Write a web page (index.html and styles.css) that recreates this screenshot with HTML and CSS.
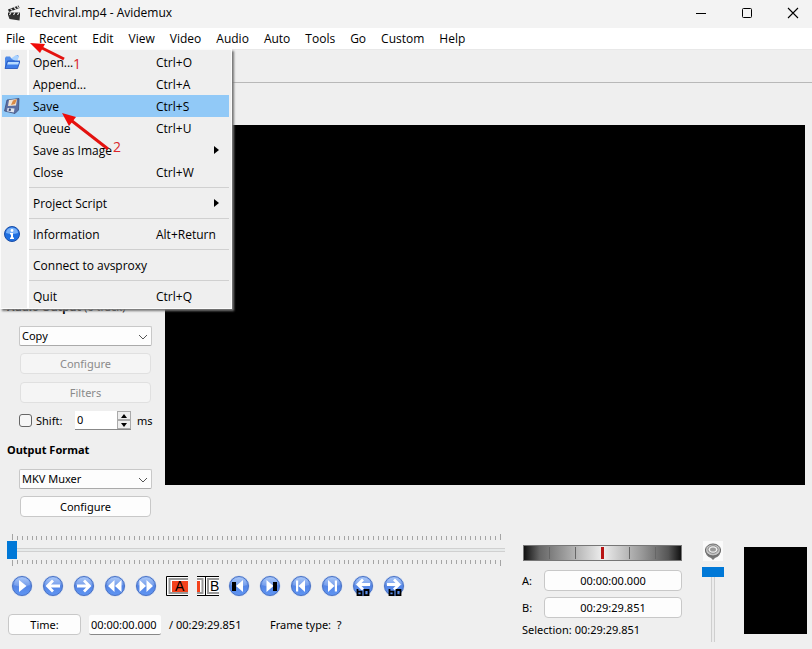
FILE: index.html
```
<!DOCTYPE html>
<html lang="en">
<head>
    <meta charset="UTF-8">
    <title>Techviral.mp4 - Avidemux</title>
    <link rel="stylesheet" href="styles.css">
</head>
<body>
    <!-- Shared icon parts -->
    <svg class="defs" width="0" height="0" aria-hidden="true">
        <defs>
            <linearGradient id="blue" x1="0" y1="0" x2="0" y2="1">
                <stop offset="0" stop-color="#9dc0f8"/>
                <stop offset="0.5" stop-color="#5586e6"/>
                <stop offset="1" stop-color="#5f95f3"/>
            </linearGradient>
            <symbol id="orb" viewBox="0 0 22 22">
                <circle cx="11" cy="11" r="10.5" fill="#c9d6ee"/>
                <circle cx="11" cy="11" r="9.5" fill="url(#blue)" stroke="#4a72c4" stroke-width="1"/>
                <path d="M3 10a8 7.500 0 0 1 16 0q-8 3-16 0z" fill="#fff" opacity="0.18"/>
            </symbol>
        </defs>
    </svg>

    <header class="titlebar">
        <svg width="14" height="16" viewBox="0 0 14 16">
            <path d="M1 4.500L11.500 0.500l1 2.500L2 7z" fill="#222"/>
            <path d="M3.500 3.600l2 2M7 2.300l2 2M10 1.200l1.600 1.900" stroke="#ddd" stroke-width="1.300"/>
            <path d="M1 7.500h12v2.500H1z" fill="#222"/>
            <path d="M4 7.500l-1.500 2.500M8 7.500l-1.500 2.500M12 7.500l-1.500 2.500" stroke="#ddd" stroke-width="1.300"/>
            <path d="M1 10h12l-.5 5.500L2.500 14z" fill="#333"/>
        </svg>
        <h1>Techviral.mp4 - Avidemux</h1>
        <div class="window-buttons">
            <button aria-label="Minimize"><svg width="12" height="12" viewBox="0 0 12 12"><path d="M1 6.500h10" stroke="#000"/></svg></button>
            <button aria-label="Maximize"><svg width="12" height="12" viewBox="0 0 12 12"><rect x="1.500" y="1.500" width="9" height="9" rx="1" fill="none" stroke="#000"/></svg></button>
            <button aria-label="Close"><svg width="12" height="12" viewBox="0 0 12 12"><path d="M1 1l10 10M11 1L1 11" stroke="#000" stroke-width="1.100"/></svg></button>
        </div>
    </header>

    <nav class="menubar">
        <a href="#" class="active">File</a>
        <a href="#">Recent</a>
        <a href="#">Edit</a>
        <a href="#">View</a>
        <a href="#">Video</a>
        <a href="#">Audio</a>
        <a href="#">Auto</a>
        <a href="#">Tools</a>
        <a href="#">Go</a>
        <a href="#">Custom</a>
        <a href="#">Help</a>

        <!-- File menu -->
        <div class="menu">
            <a href="#" class="menu-item">
                <svg width="16" height="16" viewBox="0 0 16 16">
                    <path d="M1 14V4l1-1.500h4L7 4h3l3-3 2 1-2 3v3z" fill="#4f8ae8"/>
                    <path d="M7 4.500l5-3.500 3 1.500L13 8z" fill="#a9d2ff"/>
                    <path d="M1 14.500L3.500 7H16l-2.500 7.500z" fill="#3f7eea" stroke="#1f4fb8" stroke-width="0.800"/>
                    <path d="M4 8h11l-.8 2.500H3.200z" fill="#b9dcff"/>
                </svg>
                <span>Open...</span><kbd>Ctrl+O</kbd>
            </a>
            <a href="#" class="menu-item"><i></i><span>Append...</span><kbd>Ctrl+A</kbd></a>
            <a href="#" class="menu-item selected">
                <svg width="16" height="16" viewBox="0 0 16 16">
                    <path d="M3 2l12-1.500L14.500 12 11 15.500 0.500 13z" fill="#5b6fa3" stroke="#39466f" stroke-width="0.700"/>
                    <path d="M5 2l8-1-1 6.500L4 8z" fill="#f3e3d2"/>
                    <path d="M9 2.500l4-1.500-2 5-4 1z" fill="#d98a45"/>
                    <path d="M3.500 10l7 .5-.7 4-6.800-1.200z" fill="#dfe4ee"/>
                    <path d="M5 10.500l2 .2-.5 2.300-2-.3z" fill="#39466f"/>
                </svg>
                <span>Save</span><kbd>Ctrl+S</kbd>
            </a>
            <a href="#" class="menu-item"><i></i><span>Queue</span><kbd>Ctrl+U</kbd></a>
            <a href="#" class="menu-item submenu"><i></i><span>Save as Image</span></a>
            <a href="#" class="menu-item"><i></i><span>Close</span><kbd>Ctrl+W</kbd></a>
            <hr>
            <a href="#" class="menu-item submenu"><i></i><span>Project Script</span></a>
            <hr>
            <a href="#" class="menu-item">
                <svg width="16" height="16" viewBox="0 0 16 16">
                    <circle cx="8" cy="8" r="7.500" fill="#1e6fe0" stroke="#1a4da6"/>
                    <path d="M2 7a6 5.500 0 0 1 12 0q-6 2-12 0z" fill="#8cc0ff" opacity="0.800"/>
                    <circle cx="8" cy="4.500" r="1.400" fill="#fff"/>
                    <path d="M6 7h3v4.500h1V13H6v-1.500h1v-3H6z" fill="#fff"/>
                </svg>
                <span>Information</span><kbd>Alt+Return</kbd>
            </a>
            <hr>
            <a href="#" class="menu-item"><i></i><span>Connect to avsproxy</span></a>
            <hr>
            <a href="#" class="menu-item"><i></i><span>Quit</span><kbd>Ctrl+Q</kbd></a>
        </div>

        <!-- Step arrows over the menu -->
        <div class="steps">
            <svg width="130" height="130" viewBox="0 0 130 130">
                <path d="M64 31L42 20" stroke="#e3120f" stroke-width="3"/>
                <path d="M30 15l15 1-5 9z" fill="#f00d0a"/>
                <path d="M108 121L72 93" stroke="#e3120f" stroke-width="3"/>
                <path d="M62 85l14 4-7 9z" fill="#f00d0a"/>
                <text x="73" y="41">1</text>
                <text x="113" y="124">2</text>
            </svg>
        </div>
    </nav>

    <div class="toolbar"></div>

    <main>
        <aside class="sidebar">
            <h2>Audio Output <small>(0 track)</small></h2>
            <div class="group">
                <div class="select">
                    <select aria-label="Audio codec"><option>Copy</option></select>
                    <svg width="10" height="6" viewBox="0 0 10 6"><path d="M1 1l4 4 4-4" fill="none" stroke="#555"/></svg>
                </div>
                <button class="btn" disabled>Configure</button>
                <button class="btn filters" disabled>Filters</button>
                <div class="shift">
                    <input type="checkbox" id="shift">
                    <label for="shift">Shift:</label>
                    <div class="spinner">
                        <input type="text" value="0" aria-label="Shift in ms">
                        <div class="spin-buttons">
                            <button aria-label="Up"><svg width="6" height="4" viewBox="0 0 6 4"><path d="M0 4l3-4 3 4z"/></svg></button>
                            <button aria-label="Down"><svg width="6" height="4" viewBox="0 0 6 4"><path d="M0 0l3 4 3-4z"/></svg></button>
                        </div>
                    </div>
                    <span>ms</span>
                </div>
            </div>
            <h2>Output Format</h2>
            <div class="group">
                <div class="select">
                    <select aria-label="Output format"><option>MKV Muxer</option></select>
                    <svg width="10" height="6" viewBox="0 0 10 6"><path d="M1 1l4 4 4-4" fill="none" stroke="#555"/></svg>
                </div>
                <button class="btn">Configure</button>
            </div>
        </aside>
        <div class="video"></div>
    </main>

    <footer>
        <section class="transport">
            <div class="timeline">
                <div class="ticks"></div>
                <input type="range" min="0" max="100" value="0" aria-label="Position">
                <div class="ticks"></div>
            </div>

            <div class="controls">
                <button aria-label="Play"><svg viewBox="0 0 22 22"><use href="#orb"/><path d="M8 5l7.500 6L8 17z" fill="#fff"/></svg></button>
                <button aria-label="Previous frame"><svg viewBox="0 0 22 22"><use href="#orb"/><path d="M18 11H6M11 5.500L5.500 11l5.500 5.500" fill="none" stroke="#fff" stroke-width="2.800"/></svg></button>
                <button aria-label="Next frame"><svg viewBox="0 0 22 22"><use href="#orb"/><path d="M4 11h12M11 5.500l5.500 5.500-5.500 5.500" fill="none" stroke="#fff" stroke-width="2.800"/></svg></button>
                <button aria-label="Previous keyframe"><svg viewBox="0 0 22 22"><use href="#orb"/><path d="M10.500 5v12L4 11zM17.500 5v12L11 11z" fill="#fff"/></svg></button>
                <button aria-label="Next keyframe"><svg viewBox="0 0 22 22"><use href="#orb"/><path d="M4.500 5v12l6.500-6zM11.500 5v12l6.500-6z" fill="#fff"/></svg></button>
                <button aria-label="Set start marker">
                    <svg viewBox="0 0 22 22">
                        <path d="M22 1.500H0.500v19H22" fill="#fff" stroke="#000"/>
                        <path d="M22 4H3.500v14H22" fill="none" stroke="#999" stroke-width="2"/>
                        <path d="M6 6h16v11H6z" fill="#f4421c"/>
                        <text x="9" y="16">A</text>
                    </svg>
                </button>
                <button aria-label="Set end marker">
                    <svg viewBox="0 0 22 22">
                        <path d="M0 1.500h22v19H0z" fill="#fff"/>
                        <path d="M0 1.500h22M0 20.500h22M8.500 1v20" stroke="#000"/>
                        <path d="M0 4h5.500v14H0" fill="none" stroke="#999" stroke-width="2"/>
                        <path d="M0 6h3v11H0z" fill="#f4421c"/>
                        <path d="M22 4H11v14h11" fill="none" stroke="#999" stroke-width="2"/>
                        <text x="13" y="16">B</text>
                    </svg>
                </button>
                <button aria-label="Previous black frame"><svg viewBox="0 0 22 22"><use href="#orb"/><path d="M15 5v12L8 11z" fill="#fff"/><path d="M4 7h4v9H4z"/></svg></button>
                <button aria-label="Next black frame"><svg viewBox="0 0 22 22"><use href="#orb"/><path d="M7.500 5v12l7-6z" fill="#fff"/><path d="M14 7h4v9h-4z"/></svg></button>
                <button aria-label="First frame"><svg viewBox="0 0 22 22"><use href="#orb"/><path d="M15 5v12L8.500 11zM6 5.500h2.200v11H6z" fill="#fff"/></svg></button>
                <button aria-label="Last frame"><svg viewBox="0 0 22 22"><use href="#orb"/><path d="M7 5v12l6.500-6zM13.800 5.500H16v11h-2.200z" fill="#fff"/></svg></button>
                <button aria-label="Back one minute"><svg viewBox="0 0 22 22"><use href="#orb"/><path d="M18 9.500H6M11 4.500l-5 5 5 5" fill="none" stroke="#fff" stroke-width="2.800"/><path d="M5.500 14v6.200h4v-3.500h-4M12.500 15h4v5.200h-4z" fill="none" stroke="#000" stroke-width="1.800"/></svg></button>
                <button aria-label="Forward one minute"><svg viewBox="0 0 22 22"><use href="#orb"/><path d="M4 9.500h12M11 4.500l5 5-5 5" fill="none" stroke="#fff" stroke-width="2.800"/><path d="M6.500 14v6.200h4v-3.500h-4M13.500 15h4v5.200h-4z" fill="none" stroke="#000" stroke-width="1.800"/></svg></button>
            </div>

            <div class="time-row">
                <button class="btn">Time:</button>
                <input type="text" value="00:00:00.000" aria-label="Current time">
                <span class="duration">/ 00:29:29.851</span>
                <span>Frame type:&nbsp; ?</span>
            </div>
        </section>

        <section class="markers">
            <div class="jog"><i></i><i></i><i class="center"></i><i></i><i></i></div>
            <div class="marker"><label for="markerA">A:</label><button class="btn" id="markerA">00:00:00.000</button></div>
            <div class="marker"><label for="markerB">B:</label><button class="btn" id="markerB">00:29:29.851</button></div>
            <p>Selection: 00:29:29.851</p>
        </section>

        <section class="volume">
            <svg width="20" height="20" viewBox="0 0 20 20">
                <path d="M0 0h20v20H0z" fill="#fafafa"/>
                <path d="M2 8q0 7 6 9l2 2 2-2q6-2 6-9z" fill="#777"/>
                <ellipse cx="10" cy="9" rx="7.500" ry="6" fill="#c4c4c4" stroke="#666"/>
                <ellipse cx="10" cy="8.500" rx="5" ry="3.800" fill="#eee" stroke="#888"/>
                <ellipse cx="10" cy="8.500" rx="3" ry="2" fill="#999"/>
            </svg>
            <input type="range" min="0" max="100" value="100" aria-label="Volume">
        </section>

        <div class="meter"></div>
    </footer>

    <script>
        // Tick marks above and below the timeline
        document.querySelectorAll('.ticks').forEach(row => {
            row.innerHTML = '<i></i>'.repeat(101);
        });
    </script>
</body>
</html>
```
FILE: styles.css
```
:root {
    --window: #efefef;
    --accent: #0078d7;
    --ui-font: "Noto Sans", "Segoe UI", sans-serif;
    --menu-font: "Open Sans", "Segoe UI", sans-serif;
}

* {
    box-sizing: border-box;
}

body {
    margin: 0;
    min-height: 100vh;
    display: flex;
    flex-direction: column;
    background: var(--window);
    color: #000;
    font: 11px/16px var(--ui-font);
}

button, input, select {
    font: inherit;
    color: inherit;
    margin: 0;
    padding: 0;
}

svg {
    display: block;
}

.defs {
    position: absolute;
}

/* Title bar */
.titlebar {
    display: flex;
    align-items: center;
    height: 28px;
    padding: 0 0 3px 7px;
    background: #f3f3f3;
    font-family: var(--menu-font);
}

.titlebar h1 {
    flex: 1;
    margin: 0 0 0 7px;
    font-size: 12px;
    font-weight: normal;
}

.window-buttons {
    display: flex;
}

.window-buttons button {
    display: flex;
    justify-content: center;
    width: 46px;
    background: none;
    border: none;
}

.window-buttons button:last-child {
    width: 42px;
    padding-left: 4px;
}

/* Menu bar */
.menubar {
    position: relative;
    display: flex;
    height: 21px;
    background: #fff;
    font: 12px/21px var(--menu-font);
}

.menubar > a {
    padding: 0 7px 0 8px;
    color: #000;
    text-decoration: none;
}

.menubar > .active {
    padding: 0 6px;
}

.menu {
    position: absolute;
    top: 21px;
    left: 0;
    z-index: 2;
    width: 232px;
    padding: 1px 2px 1px 1px;
    background: linear-gradient(90deg, transparent 26px, #fff 26px, #fff 28px, transparent 28px) var(--window);
    border: 1px solid #fbfbfb;
    box-shadow: 2px 2px 2px #777;
}

.menu-item {
    display: grid;
    grid-template-columns: 31px 123px 1fr;
    align-items: center;
    height: 22px;
    color: #000;
    text-decoration: none;
}

.menu-item svg {
    margin-left: 2px;
}

.menu-item kbd {
    font: inherit;
}

.menu-item.selected {
    background: #91c9f7;
}

.menu-item.submenu::after {
    content: "";
    justify-self: end;
    margin-right: 10px;
    border: 4px solid transparent;
    border-left: 5px solid #000;
    border-right: 0;
}

.menu hr {
    height: 1px;
    margin: 4px 0 4px 27px;
    border: none;
    background: #d0d0d0;
}

.steps {
    position: absolute;
    top: 0;
    left: 0;
    z-index: 3;
    pointer-events: none;
}

.steps text {
    font-size: 14px;
    fill: #d9252a;
}

.toolbar {
    height: 34px;
    border-top: 1px solid #e8e8e8;
    border-bottom: 1px solid #b8b8b8;
}

/* Sidebar and preview */
main {
    flex: 1;
    display: flex;
    padding-right: 7px;
}

.sidebar {
    display: flex;
    flex-direction: column;
    justify-content: flex-end;
    flex: 0 0 165px;
    min-width: 0;
    padding: 0 13px 13px 7px;
}

.sidebar h2 {
    margin: 0 0 11px;
    font-size: 11px;
    line-height: 16px;
}

.sidebar h2 small {
    font-size: 11px;
    font-weight: normal;
}

.group {
    display: flex;
    flex-direction: column;
    padding-left: 12px;
}

.group + h2 {
    margin-top: 12px;
}

.select {
    position: relative;
    margin-bottom: 7px;
}

.select select {
    display: block;
    width: 100%;
    height: 20px;
    padding: 0 2px;
    appearance: none;
    background: #fdfdfd;
    border: 1px solid #c8c8c8;
    border-bottom-color: #aaa;
    border-radius: 2px;
}

.select svg {
    position: absolute;
    top: 8px;
    right: 4px;
    pointer-events: none;
}

.btn {
    height: 21px;
    background: #fdfdfd;
    border: 1px solid #c8c8c8;
    border-radius: 4px;
}

.group .btn {
    margin: 0 1px;
}

.group .filters {
    margin: 8px 1px;
}

.btn:disabled {
    color: #8a8a8a;
    background: #f5f5f5;
    border-color: #e0e0e0;
}

.shift {
    display: flex;
    align-items: center;
    height: 19px;
}

.shift input[type="checkbox"] {
    flex: none;
    width: 13px;
    height: 13px;
    appearance: none;
    background: #f6f6f6;
    border: 1px solid #666;
    border-radius: 3px;
}

.shift label {
    flex: none;
    width: 38px;
    margin: 0 1px 0 4px;
}

.spinner {
    display: flex;
    flex: none;
    width: 56px;
    height: 19px;
    margin-right: 6px;
    background: #fff;
    border-bottom: 1px solid #888;
}

.spinner input {
    width: 42px;
    padding-left: 2px;
    background: none;
    border: none;
}

.spin-buttons {
    width: 14px;
}

.spin-buttons button {
    display: flex;
    align-items: center;
    justify-content: center;
    width: 14px;
    height: 9px;
    background: #eee;
    border: 1px solid #aaa;
}

.video {
    flex: 1;
    align-self: flex-start;
    aspect-ratio: 16 / 9;
    margin-top: 42px;
    background: #000;
}

/* Bottom panel */
footer {
    display: flex;
    align-items: flex-start;
    height: 119px;
    padding: 4px 5px 0 7px;
}

.transport {
    flex: 1;
    margin-right: 17px;
}

.ticks {
    display: flex;
    justify-content: space-between;
    align-items: flex-end;
    height: 6px;
    margin: 0 4px 0 5px;
}

.ticks i {
    width: 1px;
    height: 4px;
    background: #a5a5a5;
}

.ticks i:first-child,
.ticks i:last-child {
    height: 6px;
}

.timeline input + .ticks {
    align-items: flex-start;
}

.timeline input {
    display: block;
    width: 100%;
    height: 20px;
    appearance: none;
    background: linear-gradient(#e7eaea, #e7eaea) center / 100% 2px no-repeat, linear-gradient(#d0d0d0, #d0d0d0) center / 100% 4px no-repeat;
}

.timeline input::-webkit-slider-thumb {
    appearance: none;
    width: 10px;
    height: 18px;
    background: var(--accent);
}

.controls {
    display: flex;
    gap: 9px;
    margin: 9px 0 17px 4px;
}

.controls button {
    width: 22px;
    height: 22px;
    background: none;
    border: none;
}

.controls text {
    font: 14px "Liberation Sans", sans-serif;
}

.time-row {
    display: flex;
    align-items: center;
    margin-left: 1px;
}

.time-row .btn {
    width: 73px;
    margin-right: 8px;
}

.time-row input {
    width: 72px;
    height: 20px;
    padding: 0 2px;
    background: #fdfdfd;
    border: none;
    border-bottom: 1px solid #888;
    border-radius: 2px;
}

.time-row .duration {
    width: 101px;
    margin-left: 8px;
}

.markers {
    width: 160px;
    margin: 11px 20px 0 0;
}

.jog {
    display: flex;
    justify-content: space-evenly;
    height: 16px;
    margin: 0 0 9px 1px;
    padding: 1px 0;
    border: 1px solid #777;
    background: linear-gradient(90deg, #111, #666 10%, #999 25%, #eee 50%, #999 75%, #555 92%, #111);
}

.jog i {
    width: 1px;
    background: #666;
}

.jog .center {
    width: 3px;
    background: #b81414;
}

.marker {
    display: flex;
    align-items: center;
    margin-bottom: 6px;
}

.marker label {
    width: 22px;
}

.marker .btn {
    flex: 1;
}

.markers p {
    margin: 0;
    line-height: 12px;
}

.volume {
    display: flex;
    flex-direction: column;
    align-items: center;
    width: 22px;
    margin: 7px 20px 0 0;
}

.volume input {
    width: 22px;
    height: 75px;
    margin-top: 6px;
    appearance: none;
    writing-mode: vertical-lr;
    direction: rtl;
    background: linear-gradient(#ececec, #ececec) center / 2px 100% no-repeat, linear-gradient(#cfcfcf, #cfcfcf) center / 4px 100% no-repeat;
}

.volume input::-webkit-slider-thumb {
    appearance: none;
    width: 22px;
    height: 10px;
    background: var(--accent);
}

.meter {
    width: 63px;
    height: 87px;
    margin-top: 13px;
    background: #000;
}
```
